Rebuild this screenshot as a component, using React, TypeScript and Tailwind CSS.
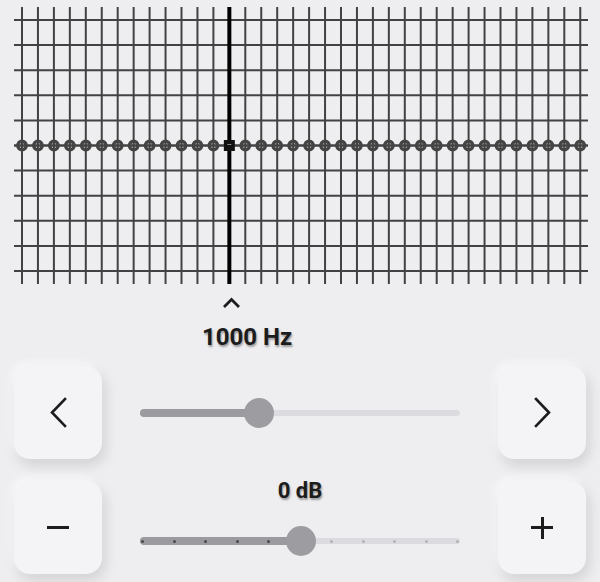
import React from 'react';

const COLS = 36;
const X0 = 22;
const DX = 15.95;
const ROWS = 11;
const Y0 = 20;
const DY = 25.1;
const SELECTED = 13;

function Grid() {
  const xs = Array.from({ length: COLS }, (_, i) => X0 + i * DX);
  const ys = Array.from({ length: ROWS }, (_, j) => Y0 + j * DY);
  const midY = ys[5];
  return (
    <svg width={600} height={290} className="block">
      {ys.map((y, j) => (
        <line key={'h' + j} x1={14} x2={588} y1={y} y2={y} stroke="#424242" strokeWidth={j === 5 ? 2.5 : 2} />
      ))}
      {xs.map((x, i) =>
        i === SELECTED ? null : (
          <line key={'v' + i} x1={x} x2={x} y1={7} y2={284} stroke="#424242" strokeWidth={2} />
        )
      )}
      <line x1={xs[SELECTED]} x2={xs[SELECTED]} y1={7} y2={284} stroke="#000" strokeWidth={4} />
      {xs.map((x, i) =>
        i === SELECTED ? (
          <g key={'p' + i}>
            <rect x={x - 5.5} y={midY - 5.5} width={11} height={11} fill="#111" />
            <rect x={x - 2} y={midY - 1.5} width={4} height={1} fill="#8a8a8a" />
          </g>
        ) : (
          <circle key={'p' + i} cx={x} cy={midY} r={4.2} fill="none" stroke="#444" strokeWidth={3.4} />
        )
      )}
    </svg>
  );
}

function Key({ children }: { children: React.ReactNode }) {
  return (
    <div className="w-[88px] h-[93px] shrink-0 rounded-[16px] bg-[#f4f3f6] flex items-center justify-center shadow-[3px_6px_14px_rgba(0,0,0,0.13),-3px_-3px_8px_rgba(255,255,255,0.8)]">
      {children}
    </div>
  );
}

function Chevron({ dir }: { dir: 'left' | 'right' }) {
  const pts = dir === 'left' ? '16,2 3,15.5 16,29' : '3,2 16,15.5 3,29';
  return (
    <svg width={19} height={31} viewBox="0 0 19 31">
      <polyline points={pts} fill="none" stroke="#1c1c1c" strokeWidth={2.6} strokeLinecap="square" strokeLinejoin="miter" />
    </svg>
  );
}

function FreqSlider() {
  return (
    <div className="relative h-[30px] flex items-center">
      <div className="h-[6px] w-full rounded-full bg-[#dcdbdf]" />
      <div className="absolute left-0 top-[11px] h-[8px] w-[120px] rounded-full bg-[#9b9a9e]" />
      <div className="absolute left-[104px] top-0 w-[30px] h-[30px] rounded-full bg-[#9d9ca0]" />
    </div>
  );
}

function GainSlider() {
  const ticks = Array.from({ length: 11 }, (_, i) => i);
  return (
    <div className="relative h-[30px] flex items-center">
      <div className="h-[6px] w-full rounded-full bg-[#dcdbdf]" />
      <div className="absolute left-0 top-[11px] h-[8px] w-[162px] rounded-full bg-[#9b9a9e]" />
      <div className="absolute inset-x-0 top-[13.5px] flex justify-between px-[1px]">
        {ticks.map((i) => (
          <div key={i} className={'w-[3px] h-[3px] rounded-full ' + (i < 5 ? 'bg-[#4a4a4c]' : 'bg-[#b3b2b6]')} />
        ))}
      </div>
      <div className="absolute left-[146px] top-0 w-[30px] h-[30px] rounded-full bg-[#9d9ca0]" />
    </div>
  );
}

export default function App() {
  return (
    <div className="w-[600px] h-[582px] bg-[#eeedf0] overflow-hidden font-['Roboto',sans-serif] text-[#1c1c1c]">
      <Grid />
      <div className="h-[33px] pl-[222px] pt-[7px]">
        <svg width={19} height={12} viewBox="0 0 19 12" className="block">
          <polyline points="2,10 9.5,2.5 17,10" fill="none" stroke="#1c1c1c" strokeWidth={2.8} />
        </svg>
      </div>
      <div className="h-[28px] pl-[202px] text-[24px] leading-[28px] font-bold [text-shadow:1px_2px_2px_rgba(0,0,0,0.35)]">
        1000 Hz
      </div>
      <div className="mt-[15px] flex items-center px-[14px]">
        <Key>
          <Chevron dir="left" />
        </Key>
        <div className="flex-1 px-[38px]">
          <FreqSlider />
        </div>
        <Key>
          <Chevron dir="right" />
        </Key>
      </div>
      <div className="mt-[22px] flex items-start px-[14px]">
        <Key>
          <div className="w-[22px] h-[3px] bg-[#1c1c1c]" />
        </Key>
        <div className="flex-1 px-[38px] flex flex-col">
          <div className="text-center text-[22px] leading-[20px] font-bold [text-shadow:1px_2px_2px_rgba(0,0,0,0.35)]">
            0 dB
          </div>
          <div className="mt-[25px]">
            <GainSlider />
          </div>
        </div>
        <Key>
          <div className="relative w-[22px] h-[22px]">
            <div className="absolute left-0 top-[9.5px] w-[22px] h-[3px] bg-[#1c1c1c]" />
            <div className="absolute top-0 left-[9.5px] w-[3px] h-[22px] bg-[#1c1c1c]" />
          </div>
        </Key>
      </div>
    </div>
  );
}
